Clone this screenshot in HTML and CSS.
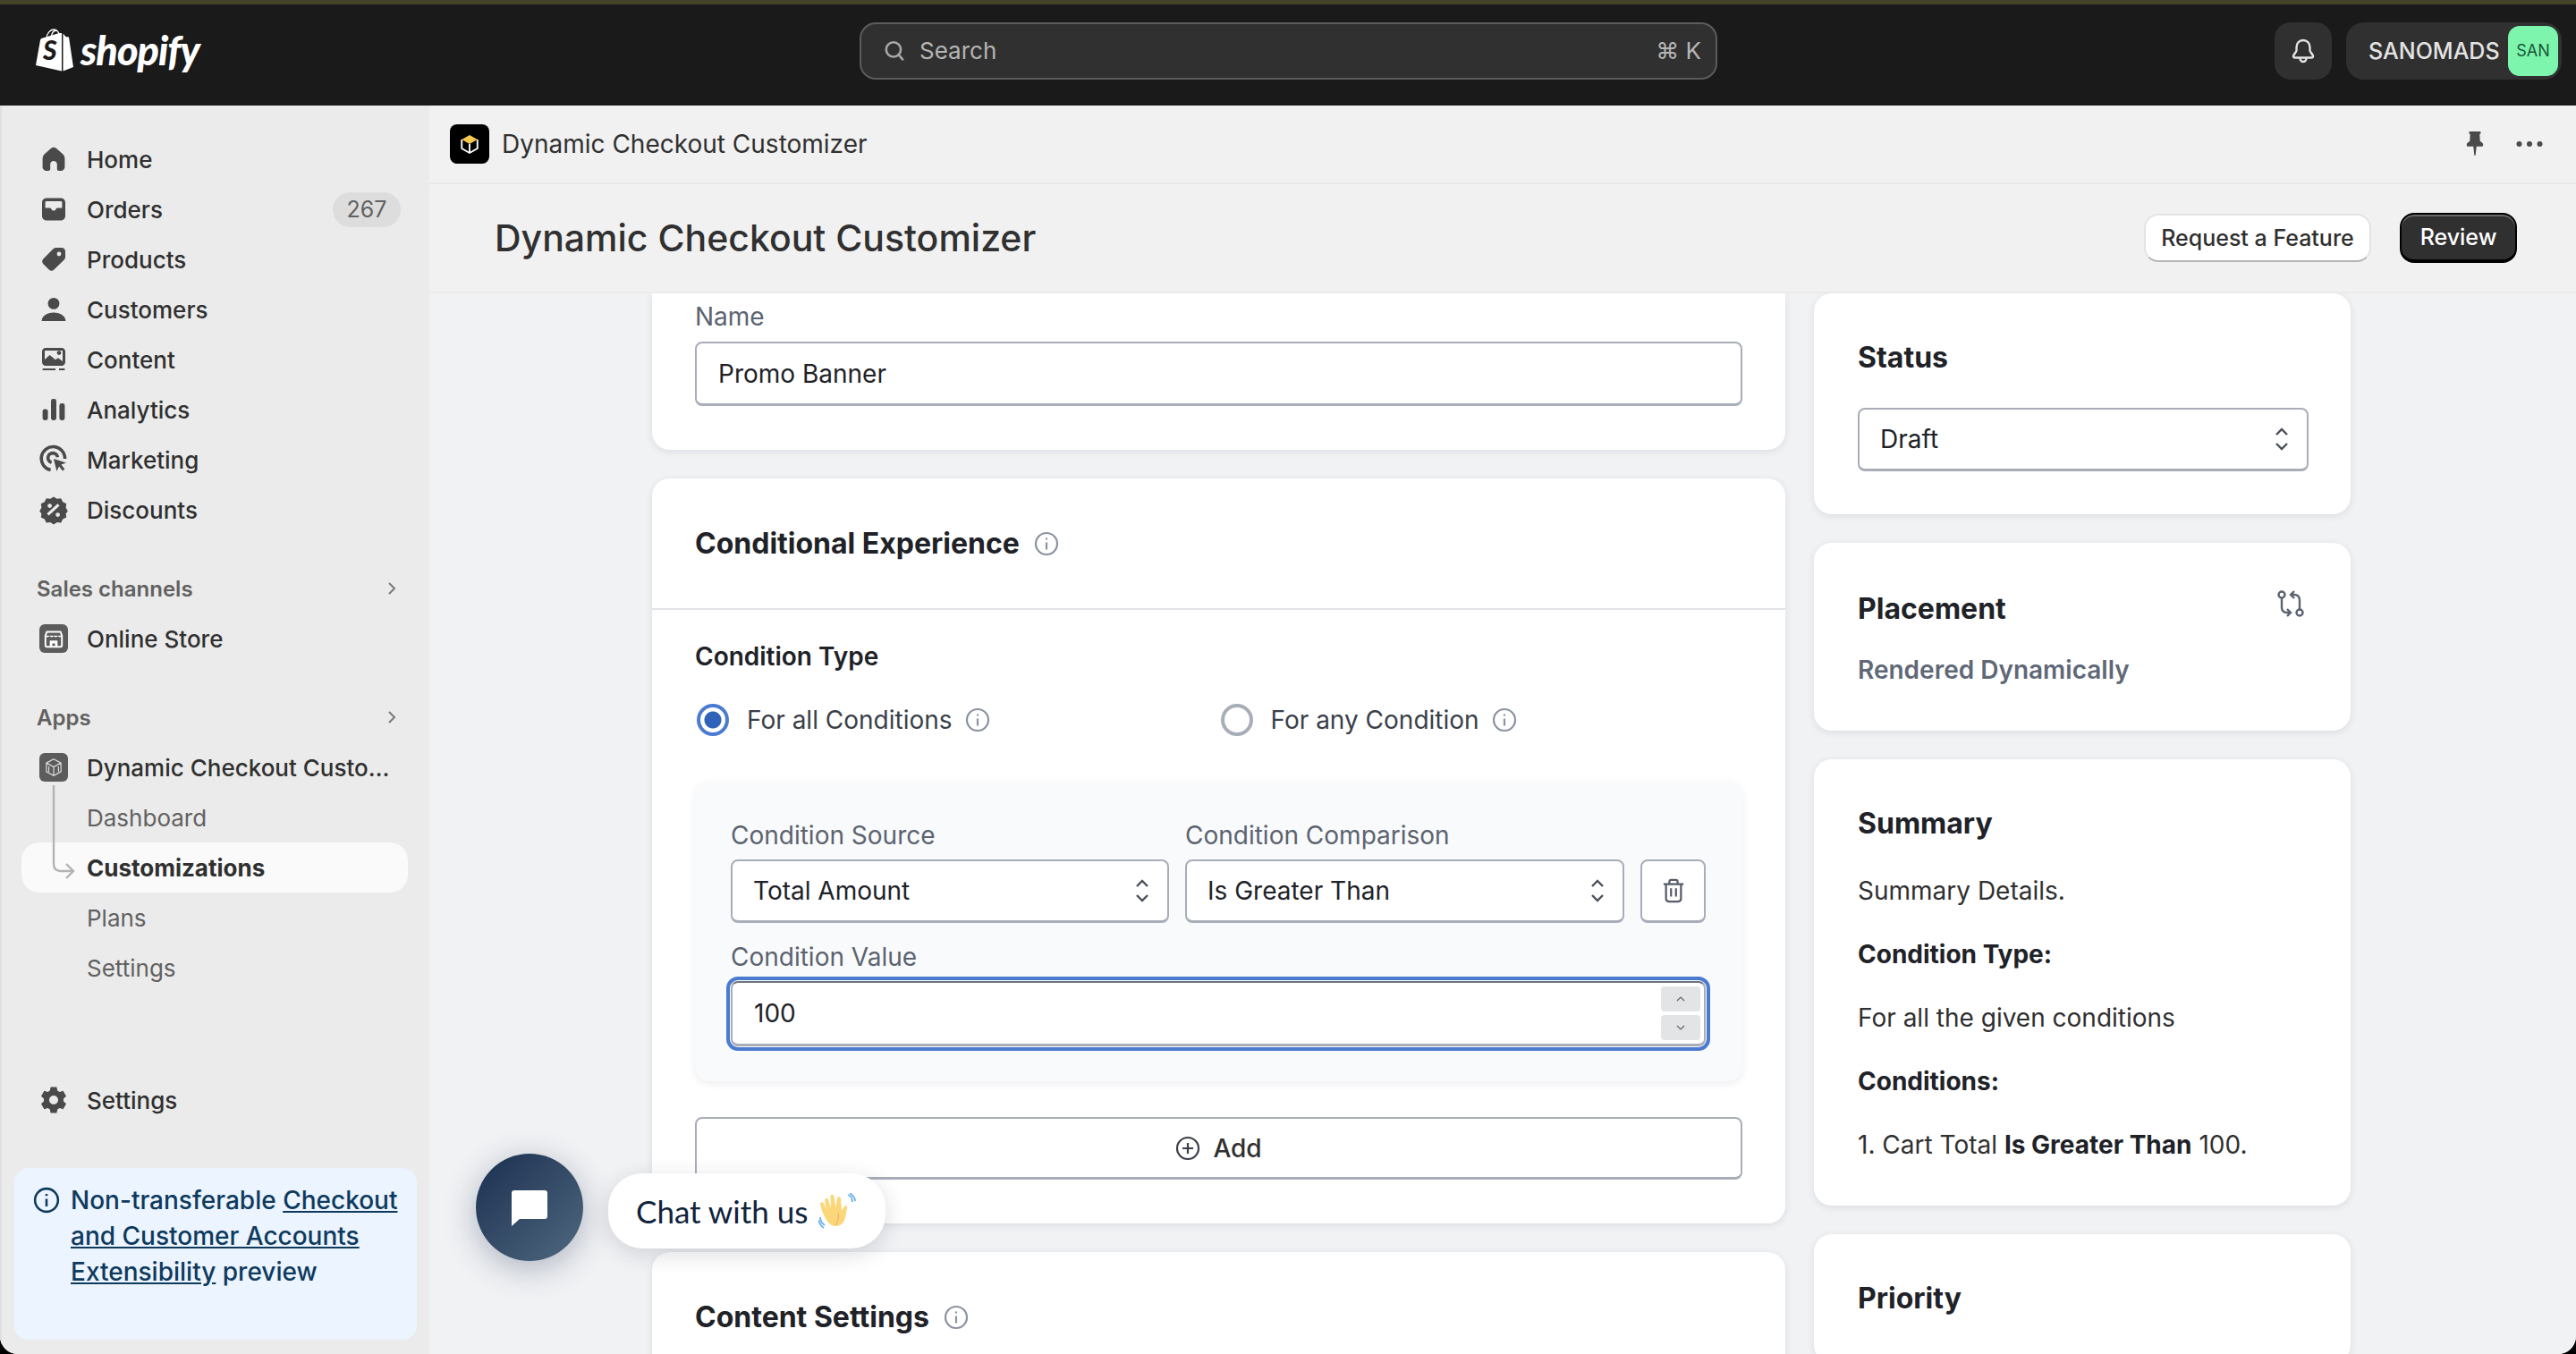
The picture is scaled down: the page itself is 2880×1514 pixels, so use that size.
FILE: index.html
```html
<!DOCTYPE html>
<html lang="en">
<head>
<meta charset="utf-8">
<title>Dynamic Checkout Customizer</title>
<link rel="stylesheet" href="styles.css">
</head>
<body>
<div class="window">
<header class="topbar">
  <div class="logo">
    <svg class="bag" viewBox="0 0 42 48"><path fill="#fff" d="M0 41 5 13q.4-1.600 2-2.200L26 5h3v42.500z"/><path fill="#fff" d="M30.500 5.500 33.500 9l3.500.4L42 43l-11.500 4.500z"/><path fill="none" stroke="#fff" stroke-width="1.300" d="M12 11c0-5 4-10 8-10s6 3 7 8M17 9c1-4 3-7 6-7"/><text x="8" y="35" class="bag-s">S</text></svg>
    <span class="wordmark">shopify</span>
  </div>
  <div class="search">
    <svg class="ico-search" viewBox="0 0 24 24"><circle cx="11" cy="10.500" r="7.500"/><path d="m16.500 16 4.500 5.500"/></svg>
    <span class="search-text">Search</span>
    <span class="search-key">⌘ K</span>
  </div>
  <div class="top-actions">
    <div class="bell-btn"><svg viewBox="0 0 28 30"><path d="M14 3c-4.600 0-7.500 3.500-7.500 8v3.500c0 2-3.500 4-3.500 6.500 0 1 .8 1.500 2 1.500h18c1.200 0 2-.5 2-1.500 0-2.500-3.500-4.500-3.500-6.500V11c0-4.500-2.900-8-7.500-8zM10.500 23c0 2.300 1.500 4 3.500 4s3.500-1.700 3.500-4"/></svg></div>
    <div class="account"><span class="account-name">SANOMADS</span><span class="avatar">SAN</span></div>
  </div>
</header>
<div class="shell">
<aside class="sidebar">
  <nav class="nav">
    <a class="row"><svg class="ni" viewBox="0 0 20 20"><path d="M10 3.400c-.5 0-1 .2-1.400.5L4.900 7.100a3 3 0 0 0-1.100 2.300v4.800c0 1.200 1 2.300 2.300 2.300h1c.6 0 1-.4 1-1v-2.700c0-1 .8-1.800 1.900-1.800s1.900.8 1.900 1.800v2.700c0 .6.400 1 1 1h1c1.300 0 2.300-1.100 2.300-2.300V9.400a3 3 0 0 0-1.100-2.300l-3.700-3.200c-.4-.3-.9-.5-1.400-.5z"/></svg><span>Home</span></a>
    <a class="row"><svg class="ni" viewBox="0 0 20 20"><path fill-rule="evenodd" d="M6 3.700h8c1.400 0 2.500 1.100 2.500 2.500v7.600c0 1.400-1.100 2.500-2.500 2.500H6c-1.400 0-2.500-1.100-2.500-2.500V6.200c0-1.400 1.100-2.500 2.500-2.500zM5.300 9.300h2.500c.4 0 .7.200.9.500l.2.400c.2.300.5.500.9.500h.4c.4 0 .7-.2.900-.5l.2-.4c.2-.3.500-.5.900-.5h2.500V6.200c0-.4-.300-.7-.7-.7H6c-.4 0-.7.300-.7.700z"/></svg><span>Orders</span><em class="badge">267</em></a>
    <a class="row"><svg class="ni" viewBox="0 0 20 20"><path fill-rule="evenodd" d="M11.500 3.500h3c1.200 0 2 .9 2 2v3c0 .8-.3 1.500-.9 2l-5.400 5.300c-.8.800-2 .8-2.800 0l-3.200-3.200c-.8-.8-.8-2 0-2.800L9.500 4.400c.5-.6 1.200-.9 2-.9zM13 8.200a1.200 1.200 0 1 0 0-2.400 1.200 1.200 0 0 0 0 2.400z"/></svg><span>Products</span></a>
    <a class="row"><svg class="ni" viewBox="0 0 20 20"><circle cx="10" cy="6.700" r="3.200"/><path d="M3.300 16.500c0-2.800 3-4.800 6.700-4.800s6.700 2 6.700 4.800z"/></svg><span>Customers</span></a>
    <a class="row"><svg class="ni" viewBox="0 0 20 20"><path fill-rule="evenodd" d="M5.500 3.500h9c1.100 0 2 .9 2 2v6c0 1.100-.9 2-2 2h-9c-1.100 0-2-.9-2-2v-6c0-1.100.9-2 2-2zM5 10l2.800-2.500 3.200 2.600 1.500-1 2.500 1.900V5.500c0-.3-.2-.5-.5-.5h-9c-.3 0-.5.200-.5.500zm8-2.500a1.200 1.200 0 1 0 0-2.400 1.200 1.200 0 0 0 0 2.400zM3.800 15h7.200v1H3.800zm9.200 0h3.200v1H13z"/></svg><span>Content</span></a>
    <a class="row"><svg class="ni" viewBox="0 0 20 20"><rect x="3.800" y="9.700" width="3" height="6.300" rx="1.200"/><rect x="8.500" y="4" width="3" height="12" rx="1.200"/><rect x="13.200" y="6.500" width="3" height="9.500" rx="1.200"/></svg><span>Analytics</span></a>
    <a class="row"><svg class="ni" viewBox="0 0 20 20"><path fill="none" stroke="#4a4a4a" stroke-width="1.800" d="M16.300 9.500a6.600 6.600 0 1 0-8 6.300"/><path fill="none" stroke="#4a4a4a" stroke-width="1.800" d="M12.200 8.600a2.700 2.700 0 1 0-3.400 3"/><path d="m10 9.500 7 2.200-2.800 1.100 2 2.400-1.200 1-2-2.400-1.300 2.700z"/></svg><span>Marketing</span></a>
    <a class="row"><svg class="ni" viewBox="0 0 20 20"><path fill-rule="evenodd" d="M10 2.800l1.900 1.100 2.200-.3 1 2 2 1-.3 2.200L17.900 10.700l-1.100 1.500.3 2.100-2 1-1 2-2.200-.3-1.900 1.200-1.900-1.200-2.200.3-1-2-2-1 .3-2.100-1.100-1.500 1.100-1.900-.3-2.200 2-1 1-2 2.200.3zM7.300 13.300l6-5.500-1.100-1.200-6 5.500zM7.800 9a1.200 1.200 0 1 0 0-2.400 1.200 1.200 0 0 0 0 2.400zm4.500 5a1.200 1.200 0 1 0 0-2.400 1.200 1.200 0 0 0 0 2.400z"/></svg><span>Discounts</span></a>
    <div class="sec sec-first"><span>Sales channels</span><svg class="chev" viewBox="0 0 12 16"><path d="m3 2 6 6-6 6"/></svg></div>
    <a class="row"><span class="sq"><svg viewBox="0 0 24 24"><path fill="none" stroke="#fff" stroke-width="1.800" d="M5 5h14l1.500 4v10a1.500 1.500 0 0 1-1.500 1.500H5A1.500 1.500 0 0 1 3.500 19V9z"/><path fill="#fff" d="M3.500 9h4c0 2-4 2-4 0zm4.400 0h4c0 2-4 2-4 0zm4.200 0h4c0 2-4 2-4 0zm4.400 0h4c0 2-4 2-4 0zM8 14h8v6h-2.600v-3h-2.800v3H8z"/></svg></span><span>Online Store</span></a>
    <div class="sec"><span>Apps</span><svg class="chev" viewBox="0 0 12 16"><path d="m3 2 6 6-6 6"/></svg></div>
    <div class="app-group">
      <a class="row"><span class="sq"><svg viewBox="0 0 24 24"><path fill="none" stroke="#ddd" stroke-width="1.100" d="M12 3.500 19.500 7.500v9L12 20.500 4.500 16.500v-9zM4.500 7.500 12 11.500l7.500-4M12 11.500v9M7 11v5.500M17 11v5.500"/></svg></span><span class="ell">Dynamic Checkout Customizer</span></a>
      <a class="row sub">Dashboard</a>
      <a class="row sub active">Customizations</a>
      <a class="row sub">Plans</a>
      <a class="row sub">Settings</a>
      <svg class="tree" viewBox="0 0 26 102"><path d="M2 0v88c0 5 2 8 8 8h14M16 88l8 8-8 8"/></svg>
    </div>
  </nav>
  <a class="row nav-settings"><svg class="ni" viewBox="0 0 20 20"><path fill-rule="evenodd" d="M8.300 2.800h3.400l.4 2 1.200.7 2-.6 1.700 3-1.500 1.300v1.600l1.500 1.300-1.700 3-2-.6-1.200.7-.4 2H8.300l-.4-2-1.200-.7-2 .6-1.700-3L4.500 10.800V9.200L3 7.900l1.700-3 2 .6 1.200-.7zM10 12.500a2.500 2.500 0 1 0 0-5 2.500 2.500 0 0 0 0 5z"/></svg><span>Settings</span></a>
  <div class="notice">
    <svg class="notice-ico" viewBox="0 0 28 28"><circle cx="14" cy="14" r="12"/><path d="M14 12.500v8M14 7.500v2"/></svg>
    <p>Non-transferable <a>Checkout and Customer Accounts Extensibility</a> preview</p>
  </div>
</aside>
<main class="main">
  <div class="appbar">
    <span class="app-logo"><svg viewBox="0 0 24 24"><path fill="#f2c94c" d="M12 4 19 8l-7 4-7-4z"/><path fill="none" stroke="#fff" stroke-width="1.500" d="M5 8v8l7 4 7-4V8M12 12v8"/></svg></span>
    <span class="app-name">Dynamic Checkout Customizer</span>
    <span class="appbar-tools">
      <svg class="pin" viewBox="0 0 24 34"><path d="M6 1h12c1 0 1.500.8 1.500 1.500S19 4.500 18 4.500l.5 9c2.500 1 4 2.500 4 4.500 0 1.500-1 2.200-2.200 2.200H14L12.800 31c-.2 1-1.400 1-1.600 0L10 20.200H3.700C2.500 20.200 1.500 19.500 1.500 18c0-2 1.500-3.500 4-4.500l.5-9c-1 0-1.500-1-1.500-2S5 1 6 1z"/></svg>
      <svg class="dots" viewBox="0 0 30 8"><circle cx="3.500" cy="4" r="3"/><circle cx="15" cy="4" r="3"/><circle cx="26.500" cy="4" r="3"/></svg>
    </span>
  </div>
  <div class="titlebar">
    <h1>Dynamic Checkout Customizer</h1>
    <div class="title-actions">
      <button class="btn-light">Request a Feature</button>
      <button class="btn-dark">Review</button>
    </div>
  </div>
  <div class="content">
    <div class="col-left">
      <section class="card card-name">
        <label class="lbl">Name</label>
        <div class="field field-name">Promo Banner</div>
      </section>
      <section class="card">
        <div class="card-head"><h2>Conditional Experience</h2><svg class="info" viewBox="0 0 28 28"><circle cx="14" cy="14" r="12"/><path d="M14 12.500v8M14 7.500v2"/></svg></div>
        <div class="card-body">
          <h3>Condition Type</h3>
          <div class="radios">
            <div class="radio-item"><span class="radio on"></span><span>For all Conditions</span><svg class="info" viewBox="0 0 28 28"><circle cx="14" cy="14" r="12"/><path d="M14 12.500v8M14 7.500v2"/></svg></div>
            <div class="radio-item"><span class="radio"></span><span>For any Condition</span><svg class="info" viewBox="0 0 28 28"><circle cx="14" cy="14" r="12"/><path d="M14 12.500v8M14 7.500v2"/></svg></div>
          </div>
          <div class="panel">
            <div class="cond-row">
              <div class="cond-col"><label class="lbl">Condition Source</label><div class="field select"><span>Total Amount</span><svg class="updown" viewBox="0 0 16 28"><path d="m2 9 6-6 6 6M2 19l6 6 6-6"/></svg></div></div>
              <div class="cond-col"><label class="lbl">Condition Comparison</label><div class="field select"><span>Is Greater Than</span><svg class="updown" viewBox="0 0 16 28"><path d="m2 9 6-6 6 6M2 19l6 6 6-6"/></svg></div></div>
              <div class="field trash"><svg viewBox="0 0 28 30"><path d="M2 7h24M9 7V4.500C9 3 10 2 11.500 2h5C18 2 19 3 19 4.500V7M5 7v17.500C5 26.500 6.500 28 8.500 28h11c2 0 3.500-1.500 3.500-3.500V7M11 12v10M17 12v10"/></svg></div>
            </div>
            <label class="lbl lbl-value">Condition Value</label>
            <div class="field focus"><span>100</span>
              <span class="spin"><i><svg viewBox="0 0 10 6"><path d="m1 5 4-4 4 4"/></svg></i><i><svg viewBox="0 0 10 6"><path d="m1 1 4 4 4-4"/></svg></i></span>
            </div>
          </div>
          <div class="field add"><svg viewBox="0 0 28 28"><circle cx="14" cy="14" r="12"/><path d="M14 8v12M8 14h12"/></svg><span>Add</span></div>
        </div>
      </section>
      <section class="card">
        <div class="card-head"><h2>Content Settings</h2><svg class="info" viewBox="0 0 28 28"><circle cx="14" cy="14" r="12"/><path d="M14 12.500v8M14 7.500v2"/></svg></div>
      </section>
    </div>
    <div class="col-right">
      <section class="card side">
        <h2>Status</h2>
        <div class="field select status-sel"><span>Draft</span><svg class="updown" viewBox="0 0 16 28"><path d="m2 9 6-6 6 6M2 19l6 6 6-6"/></svg></div>
      </section>
      <section class="card side side-place">
        <div class="place-head"><h2>Placement</h2><svg class="swap" viewBox="0 0 30 30"><circle cx="5" cy="5" r="3.500"/><circle cx="25" cy="25" r="3.500"/><path d="M5 9v10c0 4 2 6 6 6h4M11 21l4 4-4 4M25 21V11c0-4-2-6-6-6h-4M19 9l-4-4 4-4"/></svg></div>
        <p class="muted">Rendered Dynamically</p>
      </section>
      <section class="card side summary">
        <h2>Summary</h2>
        <p>Summary Details.</p>
        <p><b>Condition Type:</b></p>
        <p>For all the given conditions</p>
        <p><b>Conditions:</b></p>
        <p>1. Cart Total <b>Is Greater Than</b> 100.</p>
      </section>
      <section class="card side"><h2>Priority</h2></section>
    </div>
  </div>
</main>
</div>
<div class="chat">
  <div class="chat-btn"><svg viewBox="0 0 40 40"><path d="M3 0h34a3 3 0 0 1 3 3v26a3 3 0 0 1-3 3H9L0 40V3a3 3 0 0 1 3-3z"/></svg></div>
  <div class="chat-pill"><span>Chat with us</span>
    <svg class="wave" viewBox="0 0 42 40"><path fill="#fcd77a" d="M11 33C6 26 3 18 2 12c0-2 3-2.500 4-.5l3 7L7 8c0-2 3-3 4-.5l3 9L13.500 4c0-2.500 3.500-3 4-.5l2 12.500 1.500-10c.3-2.500 3.500-2.500 4 0l1 14 3-5c1.500-2 3.500-1 3 1.500-1 6-1.500 12-4 16-3 5-12 7-17.500 0z"/><path fill="none" stroke="#e89a5c" stroke-width=".8" d="M19 36c3-4 4-9 3-14"/><path fill="none" stroke="#6cb2e8" stroke-width="1.800" d="M33 2c3 1 5 4 5 8M35 0c3 2 6 5 6 9M2 27c0 4 2 7 5 9M0 30c1 4 3 7 6 9"/></svg>
  </div>
</div>
</div>
</body>
</html>
```
FILE: styles.css
```css
* { box-sizing: border-box; }
html, body { margin: 0; width: 2880px; height: 1514px; overflow: hidden; background: #000; }
body { font-family: Inter, "Liberation Sans", sans-serif; color: #303030; font-size: 28px; }
.window { width: 2880px; height: 1514px; position: relative; display: flex; flex-direction: column; overflow: hidden; border-radius: 0 0 20px 20px; background: #f1f2f4; }
svg { display: block; flex: none; }

/* top bar */
.topbar { height: 118px; flex: none; background: #1a1a1a; border-top: 5px solid #44432a; display: flex; align-items: center; padding: 0 16px 0 40px; position: relative; }
.logo { display: flex; align-items: center; gap: 8px; width: 921px; margin-top: -11px; }
.bag { width: 42px; height: 48px; }
.bag-s { font: italic 900 30px Lato, sans-serif; fill: #1a1a1a; }
.wordmark { font: italic 900 45px/1 Lato, sans-serif; color: #fff; letter-spacing: -1px; }
.search { width: 959px; height: 64px; margin-top: -10px; background: #303030; border: 2px solid #5c5c5c; border-radius: 18px; display: flex; align-items: center; padding: 0 16px 0 24px; color: #b5b5b5; font-size: 26px; }
.ico-search { width: 26px; height: 26px; fill: none; stroke: #a8a8a8; stroke-width: 2.400; margin-right: 15px; }
.search-text { flex: 1; }
.top-actions { margin-left: auto; margin-top: -10px; display: flex; gap: 16px; }
.bell-btn { width: 64px; height: 64px; background: #303030; border-radius: 18px; display: flex; align-items: center; justify-content: center; }
.bell-btn svg { width: 28px; height: 30px; fill: none; stroke: #e3e3e3; stroke-width: 2.400; }
.account { width: 241px; height: 64px; background: #303030; border-radius: 20px; display: flex; align-items: center; justify-content: space-between; padding: 0 4px 0 25px; }
.account-name { color: #e3e3e3; font-size: 25px; font-weight: 500; }
.avatar { width: 56px; height: 56px; background: #7df5ac; border-radius: 13px; color: #19573a; font-size: 18px; display: flex; align-items: center; justify-content: center; }

.shell { flex: 1; display: flex; min-height: 0; }

/* sidebar */
.sidebar { width: 480px; flex: none; background: #ebebeb; border-left: 2px solid #e0e0e0; display: flex; flex-direction: column; padding: 32px 0 16px; }
.nav { flex: 1; }
.row { height: 56px; margin: 0 24px 0 22px; padding-left: 16px; display: flex; align-items: center; gap: 17px; font-size: 26px; font-weight: 500; color: #303030; white-space: nowrap; min-width: 0; }
.ni { width: 40px; height: 40px; fill: #4a4a4a; }
.badge { margin-left: auto; margin-right: 8px; width: 76px; height: 39px; border-radius: 20px; background: #dddddd; color: #616161; font-style: normal; font-size: 25px; font-weight: 400; display: flex; align-items: center; justify-content: center; }
.sec { height: 56px; margin: 32px 24px 0 22px; padding: 0 12px 0 17px; display: flex; align-items: center; justify-content: space-between; color: #616161; font-size: 24px; font-weight: 600; }
.chev { width: 12px; height: 16px; fill: none; stroke: #7a7a7a; stroke-width: 2; }
.sq { width: 32px; height: 32px; margin: 0 4px; background: #5c5c5c; border-radius: 6px; display: flex; align-items: center; justify-content: center; flex: none; }
.sq svg { width: 26px; height: 26px; }
.ell { overflow: hidden; text-overflow: ellipsis; }
.app-group { position: relative; }
.sub { padding-left: 73px; color: #616161; font-weight: 400; }
.active { background: #fafafa; border-radius: 20px; color: #303030; font-weight: 700; }
.tree { position: absolute; left: 56px; top: 48px; width: 26px; height: 102px; fill: none; stroke: #b3b3b3; stroke-width: 2.400; overflow: visible; }
.nav-settings { flex: none; margin-bottom: 48px; }
.notice { margin: 0 14px 0 14px; height: 192px; background: #ebf4ff; border-radius: 16px; display: flex; padding: 16px 20px 0 21px; color: #0e3a5e; gap: 12px; }
.notice p { margin: 0; font-size: 28px; font-weight: 500; line-height: 40px; }
.notice a { text-decoration: underline; }
.notice-ico { width: 30px; height: 30px; margin-top: 5px; fill: none; stroke: #0e3a5e; stroke-width: 2.400; }

/* main */
.main { flex: 1; min-width: 0; display: flex; flex-direction: column; }
.appbar { height: 88px; flex: none; background: #f1f1f1; border-bottom: 2px solid #e8e8e8; display: flex; align-items: center; padding: 0 37px 0 23px; }
.app-logo { width: 44px; height: 44px; background: #000; border-radius: 8px; display: flex; align-items: center; justify-content: center; margin-right: 14px; }
.app-logo svg { width: 30px; height: 30px; }
.app-name { font-size: 28px; }
.appbar-tools { margin-left: auto; display: flex; align-items: center; gap: 35px; }
.pin { width: 22px; height: 30px; fill: #4a4a4a; }
.dots { width: 30px; height: 8px; fill: #4a4a4a; }
.titlebar { height: 122px; flex: none; background: #f1f1f1; border-bottom: 2px solid #ebebeb; display: flex; align-items: center; justify-content: space-between; padding: 0 66px 0 73px; }
.titlebar h1 { margin: 0; font-size: 41px; font-weight: 500; color: #303030; }
.title-actions { display: flex; gap: 32px; align-items: center; }
.btn-light, .btn-dark { font-family: inherit; font-size: 25px; font-weight: 500; border-radius: 16px; }
.btn-light { width: 254px; height: 54px; background: #fff; border: 2px solid #e3e3e3; border-bottom-color: #b5b5b5; color: #303030; }
.btn-dark { width: 131px; height: 56px; background: #303030; border: 2px solid #000; border-bottom-width: 4px; box-shadow: inset 0 2px 0 #6a6a6a; color: #fff; }

.content { flex: 1; min-height: 0; overflow: hidden; display: flex; gap: 32px; padding-left: 249px; background: #f1f2f4; align-items: flex-start; }
.col-left { width: 1267px; display: flex; flex-direction: column; gap: 32px; }
.col-right { width: 600px; display: flex; flex-direction: column; gap: 32px; }
.card { background: #fff; border-radius: 20px; box-shadow: 0 2px 8px rgba(30, 40, 60, .1); }
.card-name { border-radius: 0 0 20px 20px; padding: 6px 48px 49px; }
.lbl { display: block; height: 40px; line-height: 40px; margin-bottom: 7px; color: #5b6370; font-size: 28px; }
.card-name .lbl { margin-bottom: 8px; }
.field { background: #fff; border: 2px solid #a8adb8; border-bottom-width: 3px; border-radius: 8px; font-size: 28px; color: #202227; display: flex; align-items: center; }
.field-name { height: 72px; padding-left: 24px; }
.card-head { height: 147px; border-bottom: 2px solid #e2e3e8; padding: 0 48px; display: flex; align-items: center; gap: 16px; }
h2 { margin: 0; font-size: 32px; line-height: 48px; font-weight: 700; color: #202227; }
.info { width: 28px; height: 28px; fill: none; stroke: #8b92a0; stroke-width: 2.200; }
.card-body { padding: 32px 48px 49px; }
h3 { margin: 0; font-size: 28px; line-height: 40px; font-weight: 600; color: #202227; }
.radios { display: flex; margin-top: 31px; height: 40px; }
.radio-item { width: 594px; padding-left: 2px; display: flex; align-items: center; gap: 20px; color: #3a3f49; }
.radio-item .info { margin-left: -6px; }
.radio { width: 36px; height: 36px; border-radius: 50%; border: 4px solid #a8adb8; background: #fff; flex: none; }
.radio.on { border-color: #4a7bd0; background: radial-gradient(circle, #2f62b8 0 9px, #fff 10px); }
.panel { margin-top: 48px; height: 336px; background: #f9fafb; border-radius: 16px; box-shadow: 0 3px 8px rgba(30, 40, 60, .08); padding: 41px 40px 0; }
.cond-row { display: flex; gap: 18px; align-items: flex-end; }
.cond-col { width: 490px; }
.cond-col + .cond-col { width: 491px; }
.select { height: 71px; padding: 0 20px 0 23px; justify-content: space-between; }
.updown { width: 16px; height: 28px; fill: none; stroke: #4a4f5a; stroke-width: 2.400; }
.trash { width: 73px; height: 71px; justify-content: center; }
.trash svg { width: 26px; height: 28px; fill: none; stroke: #565c68; stroke-width: 2.400; }
.lbl-value { margin-top: 18px; }
.focus { height: 73px; width: 1090px; padding: 0 4px 0 24px; justify-content: space-between; outline: 4px solid #4a7bd0; outline-offset: 1px; border-top-color: #6e737d; }
.spin { display: flex; flex-direction: column; gap: 4px; }
.spin i { width: 44px; height: 28px; background: #e3e4e6; border-radius: 4px; display: flex; align-items: center; justify-content: center; }
.spin svg { width: 10px; height: 6px; fill: none; stroke: #5b6370; stroke-width: 1.200; }
.add { height: 70px; margin-top: 40px; justify-content: center; gap: 14px; font-weight: 500; color: #303030; }
.add svg { width: 28px; height: 28px; fill: none; stroke: #3a3f49; stroke-width: 2.200; }
.side { padding: 48px 48px 48px 49px; }
.status-sel { margin-top: 32px; width: 504px; height: 71px; }
.place-head { display: flex; justify-content: space-between; padding-right: 4px; }
.swap { width: 30px; height: 30px; margin-top: 3px; fill: none; stroke: #5b6370; stroke-width: 2.400; }
.muted { margin: 24px 0 0; line-height: 40px; font-weight: 600; color: #5f6877; font-size: 28px; }
.side-place { padding-top: 50px; }
.summary p { margin: 31px 0 0; line-height: 40px; font-size: 28px; color: #303030; }
.summary b { font-weight: 700; color: #202227; }

/* chat */
.chat { position: absolute; left: 532px; top: 1290px; display: flex; align-items: center; }
.chat-btn { width: 120px; height: 120px; border-radius: 50%; background: linear-gradient(135deg, #1a2f50, #50687f); display: flex; align-items: center; justify-content: center; box-shadow: 0 8px 36px rgba(26, 47, 80, .32); margin-right: 28px; }
.chat-btn svg { width: 40px; height: 40px; fill: #fff; margin-top: 2px; }
.chat-pill { width: 310px; height: 84px; margin-top: 8px; background: #fff; border-radius: 38px; display: flex; align-items: center; padding-left: 31px; gap: 12px; box-shadow: 0 6px 24px rgba(30, 40, 60, .16); font: 400 35px Lato, sans-serif; color: #10243c; }
.wave { width: 42px; height: 40px; }
```
